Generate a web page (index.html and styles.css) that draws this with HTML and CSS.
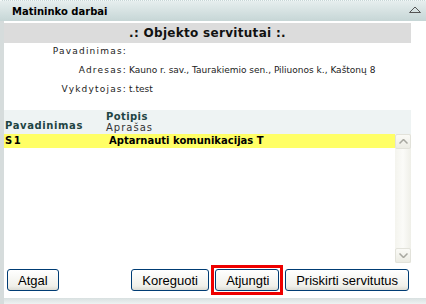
FILE: index.html
```html
<!DOCTYPE html>
<html lang="lt">
<head>
  <meta charset="UTF-8" />
  <title>Matininko darbai</title>
  <link rel="stylesheet" href="styles.css">
</head>
<body>

<div class="panel">
  <div class="titlebar">
    <span class="title">Matininko darbai</span>
    <svg class="collapse" width="12" height="7" viewBox="0 0 12 7">
      <path d="M0.5 6.5 L6 1 L11.5 6.5 Z" fill="none" stroke="#555" stroke-width="1"/>
    </svg>
  </div>

  <div class="body">
    <div class="content">
      <div class="caption">.: Objekto servitutai :.</div>

      <table class="info">
        <tr><td class="label">Pavadinimas:</td><td></td></tr>
        <tr><td class="label">Adresas:</td><td>Kauno r. sav., Taurakiemio sen., Piliuonos k., Kaštonų 8</td></tr>
        <tr><td class="label">Vykdytojas:</td><td>t.test</td></tr>
      </table>

      <div class="grid">
        <div class="grid-head">
          <div class="col-name">Pavadinimas</div>
          <div class="col-type">
            <div class="head-bold">Potipis</div>
            <div class="head-sub">Aprašas</div>
          </div>
        </div>
        <div class="grid-body">
          <div class="rows">
            <div class="row selected">
              <div class="col-name">S1</div>
              <div class="col-type">Aptarnauti komunikacijas T</div>
            </div>
          </div>
          <div class="scrollbar">
            <div class="scroll-btn">
              <svg width="9" height="5" viewBox="0 0 9 5"><path d="M0.5 4.5 L4.5 0.5 L8.5 4.5" fill="none" stroke="#a8a8a0" stroke-width="1.5"/></svg>
            </div>
            <div class="scroll-track"></div>
            <div class="scroll-btn">
              <svg width="9" height="5" viewBox="0 0 9 5"><path d="M0.5 0.5 L4.5 4.5 L8.5 0.5" fill="none" stroke="#a8a8a0" stroke-width="1.5"/></svg>
            </div>
          </div>
        </div>
      </div>

      <div class="buttons">
        <button>Atgal</button>
        <div class="button-group">
          <button class="edit">Koreguoti</button>
          <span class="marked"><button>Atjungti</button></span>
          <button>Priskirti servitutus</button>
        </div>
      </div>
    </div>
  </div>

  <div class="footer"></div>
</div>

</body>
</html>
```

FILE: styles.css
```css
* { box-sizing: border-box; }
body {
  margin: 0;
  background: #fff;
  font-family: Verdana, "DejaVu Sans", sans-serif;
}
.panel {
  width: 426px;
  height: 304px;
  display: flex;
  flex-direction: column;
}
.titlebar {
  height: 21px;
  flex: none;
  display: flex;
  align-items: center;
  justify-content: space-between;
  padding: 0 5px 0 12px;
  border-top: 1px dotted #f4f8f8;
  background: linear-gradient(#e6eeee, #c6d6d6);
}
.title {
  font-size: 10px;
  font-weight: bold;
  color: #000;
}
.collapse { margin-top: -3px; }
.body {
  flex: 1;
  padding-top: 2px;
  border-left: 4px solid #d6dcdc;
  background: #fff;
}
.content {
  width: 407px;
}
.caption {
  height: 20px;
  line-height: 20px;
  background: #dcdcdc;
  text-align: center;
  font-size: 12px;
  font-weight: bold;
  color: #111;
  letter-spacing: 0.3px;
}
.info {
  border-collapse: collapse;
  margin-top: -2px;
  font-size: 9px;
  color: #222;
}
.info td {
  height: 19px;
  padding: 0 1px;
  white-space: nowrap;
}
.info .label {
  width: 124px;
  text-align: right;
  letter-spacing: 1.2px;
}
.grid {
  margin-top: 12px;
}
.grid-head {
  display: flex;
  height: 24px;
  background: #eef3f3;
  color: #1e4444;
  font-size: 10px;
}
.grid-head .col-name {
  font-weight: bold;
  align-self: flex-end;
  padding-bottom: 3px;
  letter-spacing: 0.6px;
}
.col-name {
  width: 101px;
  padding-left: 1px;
}
.col-type { padding-left: 1px; }
.head-bold {
  font-weight: bold;
  margin-top: 1px;
  letter-spacing: 0.4px;
}
.head-sub {
  font-size: 10px;
  color: #333;
  letter-spacing: 1px;
}
.grid-body {
  display: flex;
  height: 129px;
}
.rows { flex: 1; }
.row {
  display: flex;
  height: 14px;
  line-height: 14px;
  font-size: 10px;
  font-weight: bold;
  color: #000;
}
.row .col-type { padding-left: 4px; }
.row .col-name { letter-spacing: 1.5px; }
.selected { background: #ffff66; }
.scrollbar {
  width: 16px;
  display: flex;
  flex-direction: column;
  background: linear-gradient(90deg, #f4f4ee, #fbfbf8 50%, #efefe8);
}
.scroll-btn {
  height: 15px;
  display: flex;
  align-items: center;
  justify-content: center;
  border: 1px solid #e2e2da;
  border-radius: 2px;
  background: linear-gradient(#fafaf6, #ececE4);
}
.scroll-track { flex: 1; }
.buttons {
  display: flex;
  justify-content: space-between;
  align-items: center;
  padding: 2px 2px 0 3px;
}
.button-group {
  display: flex;
  align-items: center;
  gap: 2px;
}
button {
  height: 22px;
  padding: 0 10px;
  font-family: "Liberation Sans", Arial, sans-serif;
  font-size: 13px;
  color: #000;
  border: 1px solid #003c74;
  border-radius: 3px;
  background: linear-gradient(#ffffff, #f0f0ea 80%, #dcdcd4);
}
.edit { width: 78px; }
.marked {
  display: flex;
  padding: 1px;
  border: 3px solid #ee0000;
}
.marked button { width: 64px; }
.footer {
  height: 6px;
  flex: none;
  border-left: 4px solid #d6dcdc;
  background: linear-gradient(#d8e0e0, #eef2f2);
}
```
